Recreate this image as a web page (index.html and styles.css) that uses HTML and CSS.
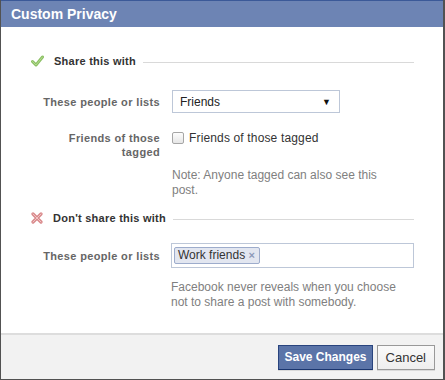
FILE: index.html
```html
<!DOCTYPE html>
<html lang="en">
<head>
    <meta charset="UTF-8">
    <title>Custom Privacy</title>
    <link rel="stylesheet" href="styles.css">
</head>
<body>

<div class="dialog">
    <div class="dialog-title">Custom Privacy</div>

    <div class="dialog-body">
        <!-- Share this with -->
        <div class="section-head">
            <svg class="section-icon" width="13" height="12" viewBox="0 0 13 12">
                <path d="M1.5 6.5 L5 10 L11.5 2" fill="none" stroke="#8cc065" stroke-width="3" stroke-linecap="round" stroke-linejoin="round"/>
                <path d="M1.5 6.5 L5 10 L11.5 2" fill="none" stroke="#b4db8e" stroke-width="1" stroke-linecap="round" stroke-linejoin="round"/>
            </svg>
            <span class="section-title">Share this with</span>
            <span class="section-rule"></span>
        </div>

        <div class="form-grid first">
            <div class="label mid">These people or lists</div>
            <div class="select">
                <span>Friends</span>
                <span class="arrow">&#9660;</span>
            </div>

            <div class="label">Friends of those<br>tagged</div>
            <div class="field">
                <label class="check">
                    <span class="box"></span>
                    Friends of those tagged
                </label>
                <p class="note">Note: Anyone tagged can also see this post.</p>
            </div>
        </div>

        <!-- Don't share this with -->
        <div class="section-head second">
            <svg class="section-icon" width="12" height="12" viewBox="0 0 12 12">
                <path d="M2 2 L10 10 M10 2 L2 10" fill="none" stroke="#d98a8c" stroke-width="3.2" stroke-linecap="round"/>
                <path d="M2 2 L10 10 M10 2 L2 10" fill="none" stroke="#f0c3c4" stroke-width="1" stroke-linecap="round"/>
            </svg>
            <span class="section-title">Don't share this with</span>
            <span class="section-rule"></span>
        </div>

        <div class="form-grid second">
            <div class="label mid">These people or lists</div>
            <div class="tokens">
                <span class="token">Work friends <span class="token-x">&#215;</span></span>
            </div>

            <div></div>
            <p class="note wide">Facebook never reveals when you choose not to share a post with somebody.</p>
        </div>
    </div>

    <div class="dialog-footer">
        <button class="btn primary">Save Changes</button>
        <button class="btn">Cancel</button>
    </div>
</div>

</body>
</html>
```

FILE: styles.css
```css
body {
    margin: 0;
    font-family: "Liberation Sans", Arial, sans-serif;
    font-size: 12px;
    color: #333;
    background: #fff;
}
.dialog {
    width: 445px;
    height: 380px;
    box-sizing: border-box;
    border: 1px solid #525252;
    border-top: none;
    border-right-width: 2px;
    display: flex;
    flex-direction: column;
}
.dialog-title {
    height: 26px;
    background: #6d84b4;
    border-top: 1px solid #3b5998;
    color: #fff;
    font-size: 14px;
    font-weight: bold;
    line-height: 26px;
    padding-left: 10px;
}
.dialog-body {
    flex: 1;
    padding: 27px 29px 0 30px;
}
.section-head {
    display: flex;
    align-items: center;
    height: 14px;
}
.section-head.second {
    margin-top: 13px;
}
.section-icon {
    margin-right: 10px;
}
.section-title {
    font-size: 11px;
    font-weight: bold;
    color: #333;
    white-space: nowrap;
    letter-spacing: 0.25px;
}
.section-rule {
    flex: 1;
    height: 1px;
    background: #d9d9d9;
    margin-left: 7px;
    margin-top: 3px;
}
.form-grid {
    display: grid;
    grid-template-columns: 129px 1fr;
    column-gap: 12px;
    row-gap: 18px;
    margin-top: 22px;
}
.form-grid.second {
    margin-top: 18px;
}
.label {
    text-align: right;
    font-size: 11px;
    font-weight: bold;
    color: #666;
    line-height: 14px;
    letter-spacing: 0.35px;
}
.label.mid {
    align-self: center;
}
.select {
    width: 168px;
    height: 23px;
    box-sizing: border-box;
    border: 1px solid #bdc7d8;
    display: flex;
    align-items: center;
    justify-content: space-between;
    padding: 0 8px 0 7px;
    font-size: 12px;
    color: #222;
}
.arrow {
    font-size: 9px;
    color: #111;
}
.check {
    display: flex;
    align-items: center;
    color: #333;
    height: 14px;
    letter-spacing: 0.15px;
}
.box {
    width: 10px;
    height: 10px;
    border: 1px solid #a6a6a6;
    border-radius: 2px;
    background: linear-gradient(#fdfdfd, #e6e6e6);
    margin-right: 5px;
}
.note {
    margin: 23px 0 0;
    color: #808080;
    line-height: 15px;
    width: 220px;
}
.note.wide {
    margin: -6px 0 0 -1px;
    width: 240px;
}
.tokens {
    height: 25px;
    box-sizing: border-box;
    border: 1px solid #bdc7d8;
    margin-left: -1px;
    padding: 2px;
    display: flex;
    align-items: center;
}
.token {
    height: 17px;
    box-sizing: border-box;
    background: #e2e6f0;
    border: 1px solid #9daccc;
    border-radius: 2px;
    padding: 0 4px 0 3px;
    line-height: 15px;
    color: #333;
}
.token-x {
    color: #8d99b9;
    font-weight: bold;
    font-size: 11px;
}
.dialog-footer {
    height: 44px;
    background: #f2f2f2;
    border-top: 2px solid #dddddd;
    display: flex;
    justify-content: flex-end;
    align-items: center;
    gap: 4px;
    padding-right: 8px;
}
.btn {
    height: 25px;
    padding: 0 8px;
    font-family: "Liberation Sans", Arial, sans-serif;
    font-size: 13px;
    color: #333;
    background: linear-gradient(#fafafa, #eeeeee);
    border: 1px solid #999;
    box-shadow: 0 1px 0 rgba(0, 0, 0, 0.1);
}
.btn.primary {
    background: #5b74a8;
    border-color: #29447e #29447e #1a356e;
    color: #fff;
    font-size: 12px;
    font-weight: bold;
    padding: 0 5px;
}
```
